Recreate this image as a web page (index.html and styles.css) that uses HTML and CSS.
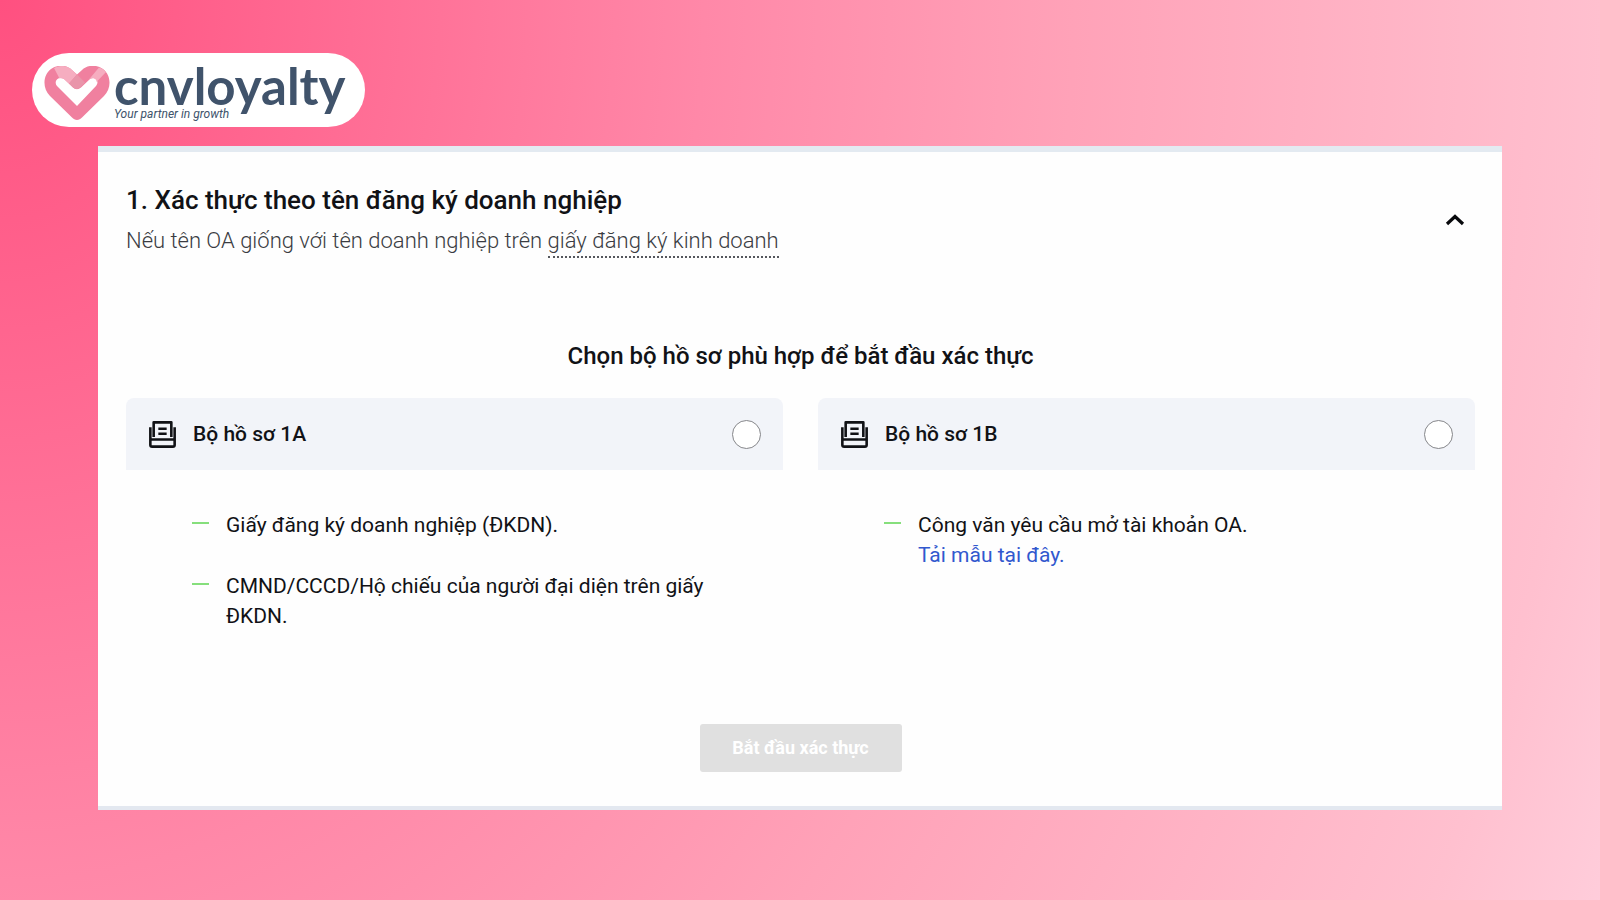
FILE: index.html
```html
<!DOCTYPE html>
<html lang="vi">
<head>
<meta charset="utf-8">
<meta name="viewport" content="width=device-width, initial-scale=1">
<title>Xác thực OA - CNV Loyalty</title>
<link rel="stylesheet" href="styles.css">
</head>
<body>
<svg class="sprite" aria-hidden="true">
  <symbol id="icon-file" viewBox="0 0 26 26">
    <path d="M4.500 15.500V1.300H21.500V15.500M1.300 6V23Q1.300 24.700 3 24.700H23Q24.700 24.700 24.700 23V6M1.300 17.800H24.700M9 7.500H17M9 12.300H17" fill="none" stroke="currentColor" stroke-width="2.500" stroke-linejoin="round"/>
  </symbol>
</svg>
<header class="brand">
  <svg class="brand-mark" viewBox="0 0 66 54" aria-hidden="true">
    <path d="M33 54C31 54 29.500 53 28 51.500L6 30C-2 22-1 9 7 3C14-2 23-1 28 4L33 8.500L38 4C43-1 52-2 59 3C67 9 68 22 60 30L38 51.500C36.500 53 35 54 33 54ZM33 40L52 20C56 15 51 10 46 13L37 21.500Q33 25 29 21.500L20 13C15 10 9 15 13 20Z" fill="#f0809f" fill-rule="evenodd"/>
    <path d="M10 2C16-1 23-1 28 4L33 8.500L25 17.500L20 13C18 12 17 12 15.500 12.500Z" fill="#f6adc0"/>
    <path d="M33 8.500L41 16.500L37 20.500Q33 25 29 21.500L25 17.500Z" fill="#e995aa"/>
    <path d="M62 6L52.500 16C53 13 49 11 46 13L44.500 14L55 1.500C59 3 60 4 62 6Z" fill="#f6adc0"/>
  </svg>
  <div class="brand-text">
    <span class="brand-name">cnvloyalty</span>
    <span class="brand-tagline">Your partner in growth</span>
  </div>
</header>
<main class="card">
  <div class="card-head">
    <div>
      <h1 class="title">1. Xác thực theo tên đăng ký doanh nghiệp</h1>
      <p class="subtitle">Nếu tên OA giống với tên doanh nghiệp trên <span class="term">giấy đăng ký kinh doanh</span></p>
    </div>
    <button class="toggle" type="button" aria-label="Thu gọn">
      <svg width="20" height="12" viewBox="0 0 20 12"><path d="M2 10L10 2.500L18 10" fill="none" stroke="currentColor" stroke-width="3.200"/></svg>
    </button>
  </div>
  <form class="picker">
    <h2 class="picker-title">Chọn bộ hồ sơ phù hợp để bắt đầu xác thực</h2>
    <div class="options">
      <section>
        <label class="option" for="set-a">
          <svg class="option-icon" aria-hidden="true"><use href="#icon-file"/></svg>
          <span class="option-name">Bộ hồ sơ 1A</span>
          <input class="option-radio" type="radio" name="set" id="set-a">
        </label>
        <ul class="docs">
          <li>Giấy đăng ký doanh nghiệp (ĐKDN).</li>
          <li>CMND/CCCD/Hộ chiếu của người đại diện trên giấy ĐKDN.</li>
        </ul>
      </section>
      <section>
        <label class="option" for="set-b">
          <svg class="option-icon" aria-hidden="true"><use href="#icon-file"/></svg>
          <span class="option-name">Bộ hồ sơ 1B</span>
          <input class="option-radio" type="radio" name="set" id="set-b">
        </label>
        <ul class="docs">
          <li>Công văn yêu cầu mở tài khoản OA.<br><a href="#mau">Tải mẫu tại đây.</a></li>
        </ul>
      </section>
    </div>
    <button class="submit" type="submit" disabled>Bắt đầu xác thực</button>
  </form>
</main>
</body>
</html>
```
FILE: styles.css
```css
* { box-sizing: border-box; }

body {
  margin: 0;
  min-height: 100vh;
  padding: 53px 98px 89px;
  font-family: Roboto, "Noto Sans", sans-serif;
  color: #111216;
  background: radial-gradient(110% 245% at 0 0, #ff5080 0%, #ff88a8 40%, #ffa2b8 61%, #ffc0cf 91%, #ffcddb 100%);
}

h1, h2, p, ul { margin: 0; padding: 0; }

.sprite { position: absolute; width: 0; height: 0; }

.brand {
  display: flex;
  width: max-content;
  height: 74px;
  margin: 0 0 19px -66px;
  padding: 9px 19px 0 12px;
  gap: 4px;
  border-radius: 37px;
  background: #fff;
}
.brand-mark { width: 66px; height: 54px; margin-top: 4px; }
.brand-text { display: flex; flex-direction: column; }
.brand-name {
  font: 700 51px/48px Lato, sans-serif;
  color: #40536b;
}
.brand-tagline {
  margin-top: -3px;
  font-size: 12px;
  font-style: italic;
  line-height: 14px;
  color: #40536b;
}

.card {
  padding: 31px 27px 34px 28px;
  border-top: 6px solid #e3eaf1;
  border-bottom: 4px solid #e3e8f0;
  background: #fefefe;
}
.card-head {
  display: flex;
  justify-content: space-between;
  align-items: center;
}
.title {
  font-size: 26px;
  font-weight: 500;
  line-height: 34px;
}
.subtitle {
  margin-top: 8px;
  font-size: 22px;
  font-weight: 300;
  line-height: 32px;
  color: #3a3c42;
}
.term { padding-bottom: 3px; border-bottom: 2px dotted #55575d; }
.toggle {
  display: flex;
  padding: 10px;
  border: 0;
  background: none;
  color: #08090c;
}

.picker {
  display: flex;
  flex-direction: column;
  align-items: center;
  margin-top: 83px;
}
.picker-title {
  font-size: 24px;
  font-weight: 500;
  line-height: 32px;
}
.options {
  display: grid;
  grid-template-columns: 1fr 1fr;
  gap: 35px;
  width: 100%;
  margin-top: 26px;
}
.option {
  display: flex;
  align-items: center;
  height: 72px;
  padding: 0 22px 0 23px;
  border-radius: 8px 8px 0 0;
  background: #f2f4f9;
}
.option-icon { width: 27px; height: 27px; }
.option-name {
  flex: 1;
  margin-left: 17px;
  font-size: 21px;
  font-weight: 500;
}
.option-radio {
  appearance: none;
  width: 29px;
  height: 29px;
  margin: 0;
  border: 1px solid #85868a;
  border-radius: 50%;
  background: #fff;
}
.docs {
  padding: 40px 60px 0 66px;
  list-style: none;
  font-size: 21px;
  line-height: 30px;
}
.docs li { position: relative; padding-left: 34px; }
.docs li + li { margin-top: 31px; }
.docs li::before {
  content: "";
  position: absolute;
  top: 12px;
  left: 0;
  width: 17px;
  height: 2px;
  background: #86df7c;
}
.docs a { color: #3158ce; text-decoration: none; }
.submit {
  width: 202px;
  height: 48px;
  margin-top: 93px;
  border: 0;
  border-radius: 3px;
  background: #e0e0e0;
  color: #fff;
  font: 700 18px/24px Roboto, sans-serif;
}
```
